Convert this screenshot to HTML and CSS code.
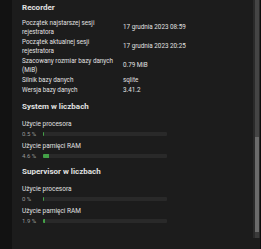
FILE: index.html
```html
<!DOCTYPE html>
<html lang="pl">
  <head>
    <meta charset="UTF-8" />
    <meta name="viewport" content="width=device-width, initial-scale=1.0" />
    <title>Kondycja systemu</title>
    <link rel="stylesheet" href="styles.css">
  </head>
  <body>
    <div class="edge"></div>
    <div class="panel">
      <h2>Recorder</h2>
      <div class="info-table">
        <div class="label"><span>Początek najstarszej sesji</span><span>rejestratora</span></div>
        <div class="value">17 grudnia 2023 08:59</div>
        <div class="label"><span>Początek aktualnej sesji</span><span>rejestratora</span></div>
        <div class="value">17 grudnia 2023 20:25</div>
        <div class="label"><span>Szacowany rozmiar bazy danych</span><span>(MiB)</span></div>
        <div class="value">0.79 MiB</div>
        <div class="label"><span>Silnik bazy danych</span></div>
        <div class="value">sqlite</div>
        <div class="label"><span>Wersja bazy danych</span></div>
        <div class="value">3.41.2</div>
      </div>

      <h2 class="section">System w liczbach</h2>
      <div class="metric">
        <div class="metric-name">Użycie procesora</div>
        <div class="metric-row">
          <span class="metric-value">0.5 %</span>
          <div class="bar"><div class="bar-fill" style="width: 0.5%"></div></div>
        </div>
      </div>
      <div class="metric">
        <div class="metric-name">Użycie pamięci RAM</div>
        <div class="metric-row">
          <span class="metric-value">4.6 %</span>
          <div class="bar"><div class="bar-fill" style="width: 4.6%"></div></div>
        </div>
      </div>

      <h2 class="section">Supervisor w liczbach</h2>
      <div class="metric">
        <div class="metric-name">Użycie procesora</div>
        <div class="metric-row">
          <span class="metric-value">0 %</span>
          <div class="bar"><div class="bar-fill" style="width: 0%"></div></div>
        </div>
      </div>
      <div class="metric">
        <div class="metric-name">Użycie pamięci RAM</div>
        <div class="metric-row">
          <span class="metric-value">1.9 %</span>
          <div class="bar"><div class="bar-fill" style="width: 1.9%"></div></div>
        </div>
      </div>
    </div>
    <div class="scrollbar">
      <div class="track"></div>
      <div class="thumb"></div>
      <div class="arrow"></div>
      <div class="scroll-end"></div>
    </div>
    <div class="edge-right"></div>
  </body>
</html>
```

FILE: styles.css
```css
body {
  font-family: Roboto, "Liberation Sans", sans-serif;
  margin: 0;
  height: 249px;
  display: flex;
  background-color: #111111;
  color: #e1e1e1;
  overflow: hidden;
}
.edge {
  width: 12px;
  background-color: #121212;
}
.panel {
  flex: 1;
  background-color: #1c1c1c;
  padding: 2px 0 0 10px;
}
h2 {
  font-size: 8px;
  font-weight: 700;
  margin: 0;
  line-height: 11px;
}
.section {
  margin-top: 6px;
}
.info-table {
  display: grid;
  grid-template-columns: 101px 1fr;
  margin-top: 5px;
  font-size: 6.3px;
  line-height: 9px;
}
.info-table .label,
.info-table .value {
  padding: 0.5px 0;
}
.info-table .label span {
  display: block;
  white-space: nowrap;
}
.info-table .value {
  display: flex;
  align-items: center;
}
.metric {
  margin-top: 4px;
  font-size: 6.5px;
}
.section + .metric {
  margin-top: 8px;
}
.metric-name {
  line-height: 9px;
}
.metric-row {
  display: flex;
  align-items: center;
  height: 9px;
}
.metric-value {
  width: 21px;
  font-size: 6px;
  color: #9a9a9a;
}
.bar {
  width: 124px;
  height: 4px;
  border-radius: 1px;
  background-color: #292929;
  overflow: hidden;
}
.bar-fill {
  height: 100%;
  min-width: 1px;
  background-color: #43a047;
}
.scrollbar {
  width: 7px;
  display: flex;
  flex-direction: column;
  background-color: #2a2a2a;
}
.track {
  height: 137px;
  margin: 0 1px 0 2px;
  background-color: #454545;
}
.thumb {
  height: 95px;
  margin: 0 1px 0 2px;
  background-color: #6b6b6b;
}
.arrow {
  height: 6px;
  margin: 0 1px 0 2px;
  background-color: #3a3a3a;
}
.scroll-end {
  flex: 1;
  background-color: #1c1c1c;
}
.edge-right {
  width: 1px;
  background-color: #0c0c0c;
}
```
